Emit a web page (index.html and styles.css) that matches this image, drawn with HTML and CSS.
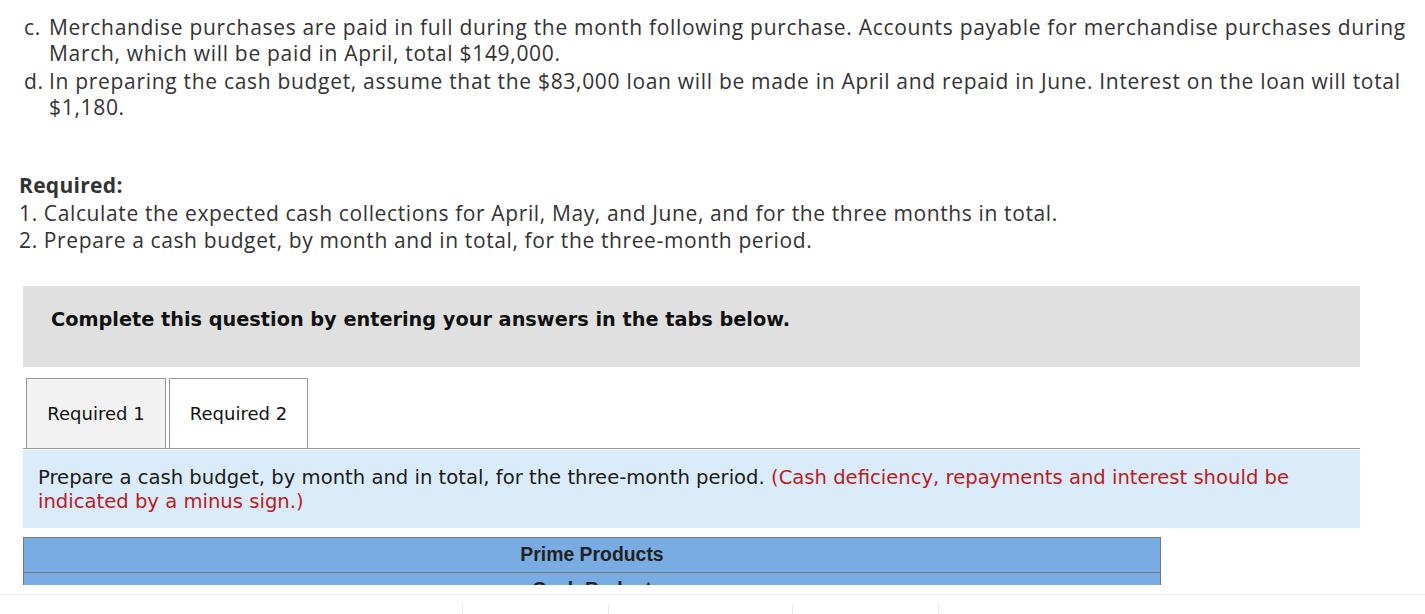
FILE: index.html
```html
<!DOCTYPE html>
<html>
<head>
<meta charset="utf-8">
<link rel="stylesheet" href="styles.css">
</head>
<body>
<div class="problem">
  <div class="item"><span class="marker">c.</span><span class="itext">Merchandise purchases are paid in full during the month following purchase. Accounts payable for merchandise purchases during<br>March, which will be paid in April, total $149,000.</span></div>
  <div class="item"><span class="marker">d.</span><span class="itext">In preparing the cash budget, assume that the $83,000 loan will be made in April and repaid in June. Interest on the loan will total<br>$1,180.</span></div>
</div>
<div class="required">
  <div class="req-title">Required:</div>
  <div>1. Calculate the expected cash collections for April, May, and June, and for the three months in total.</div>
  <div>2. Prepare a cash budget, by month and in total, for the three-month period.</div>
</div>
<div class="instruct">Complete this question by entering your answers in the tabs below.</div>
<div class="tabs">
  <div class="tab">Required 1</div>
  <div class="tab active">Required 2</div>
</div>
<div class="prompt">Prepare a cash budget, by month and in total, for the three-month period. <span class="red">(Cash deficiency, repayments and interest should be indicated by a minus sign.)</span></div>
<div class="table-wrap">
  <div class="trow">Prime Products</div>
  <div class="trow">Cash Budget</div>
</div>
<div class="footer">
  <div class="fcell w1"></div>
  <div class="fcell w2"></div>
  <div class="fcell w3"></div>
  <div class="fcell w4"></div>
  <div class="fcell w5"></div>
</div>
</body>
</html>
```
FILE: styles.css
```css
html, body {
  margin: 0;
  padding: 0;
  background: #fff;
  overflow: hidden;
}
body {
  width: 1425px;
  height: 614px;
}
.problem {
  padding: 14px 0 0 24px;
  font-family: "Open Sans", Lato, sans-serif;
  font-size: 21px;
  letter-spacing: 0.69px;
  line-height: 26px;
  color: #333;
}
.item {
  display: flex;
  margin-bottom: 2px;
}
.marker {
  width: 25px;
  flex: none;
}
.itext {
  white-space: nowrap;
}
.required {
  margin-top: 52px;
  padding-left: 19px;
  font-family: "Open Sans", Lato, sans-serif;
  font-size: 21px;
  letter-spacing: 0.62px;
  line-height: 27.5px;
  color: #333;
}
.req-title {
  font-weight: bold;
  letter-spacing: 0.3px;
}
.instruct {
  margin: 31px 0 0 23px;
  width: 1309px;
  height: 57px;
  padding: 24px 0 0 28px;
  background: #e0e0e0;
  font-family: Verdana, "DejaVu Sans", sans-serif;
  font-weight: bold;
  font-size: 19.3px;
  line-height: 20px;
  color: #111;
}
.tabs {
  margin: 11px 0 0 23px;
  width: 1337px;
  padding-left: 3px;
  box-sizing: border-box;
  display: flex;
  gap: 3px;
  border-bottom: 1px solid #9a9a9a;
}
.tab {
  width: 138px;
  height: 69px;
  border: 1px solid #9a9a9a;
  border-bottom: none;
  background: #f2f2f2;
  display: flex;
  align-items: center;
  justify-content: center;
  font-family: Verdana, "DejaVu Sans", sans-serif;
  font-size: 18px;
  color: #111;
}
.tab.active {
  background: #fff;
  width: 137px;
}
.prompt {
  margin: 1px 0 0 23px;
  width: 1322px;
  padding: 16px 0 14px 15px;
  background: #daecf9;
  font-family: Verdana, "DejaVu Sans", sans-serif;
  font-size: 19.6px;
  line-height: 24px;
  color: #1a1a1a;
}
.red {
  color: #be1a22;
}
.table-wrap {
  margin: 9px 0 0 23px;
  width: 1136px;
  height: 47px;
  overflow: hidden;
  border: 1px solid #777;
  border-bottom: none;
  background: #78ace3;
}
.trow {
  height: 34px;
  border-bottom: 1px solid #777;
  display: flex;
  align-items: center;
  justify-content: center;
  font-family: "Liberation Sans", Arial, sans-serif;
  font-weight: bold;
  font-size: 19.4px;
  color: #222;
}
.footer {
  margin-top: 9px;
  border-top: 1px solid #ececec;
  display: flex;
  padding-top: 8px;
  height: 30px;
}
.fcell {
  border-left: 1px solid #ececec;
}
.fcell.w1 { width: 462px; border-left: none; }
.fcell.w2 { width: 145px; }
.fcell.w3 { width: 183px; }
.fcell.w4 { width: 145px; }
.fcell.w5 { flex: 1; }
```
